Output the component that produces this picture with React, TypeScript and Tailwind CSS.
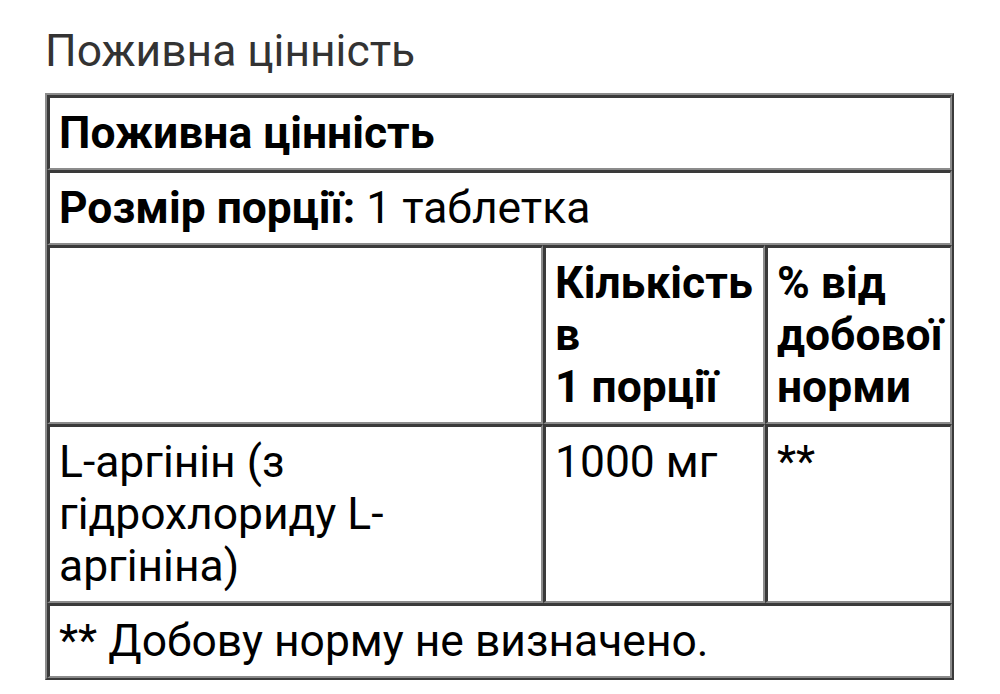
const cell =
  "align-top border-t-[3px] border-l-[3px] border-b-2 border-r-2 border-t-[#3a3a3a] border-l-[#3a3a3a] border-b-[#8c8c8c] border-r-[#8c8c8c] px-[9px] py-[9px] text-left";

export default function App() {
  return (
    <div className="min-h-screen bg-white pl-[45px] pt-[25px] font-['Roboto','Noto_Sans',sans-serif]">
      <h2 className="text-[44.4px] font-normal leading-[52px] text-[#333333]">Поживна цінність</h2>

      <table className="mt-[16px] w-[909px] table-fixed border-separate border-spacing-0 border-2 border-t-[#8c8c8c] border-l-[#8c8c8c] border-b-[#3a3a3a] border-r-[#3a3a3a] text-[44.4px] leading-[52px] text-black">
        <colgroup>
          <col className="w-[496px]" />
          <col className="w-[222px]" />
          <col className="w-[187px]" />
        </colgroup>
        <tbody>
          <tr>
            <th colSpan={3} className={`${cell} font-bold`}>
              Поживна цінність
            </th>
          </tr>
          <tr>
            <td colSpan={3} className={cell}>
              <strong className="font-bold">Розмір порції:</strong> 1 таблетка
            </td>
          </tr>
          <tr>
            <th className={cell}></th>
            <th className={`${cell} font-bold`}>
              Кількість в
              <br />1 порції
            </th>
            <th className={`${cell} font-bold`}>% від добової норми</th>
          </tr>
          <tr>
            <td className={cell}>L-аргінін (з гідрохлориду L-аргініна)</td>
            <td className={cell}>1000 мг</td>
            <td className={cell}>**</td>
          </tr>
          <tr>
            <td colSpan={3} className={cell}>
              ** Добову норму не визначено.
            </td>
          </tr>
        </tbody>
      </table>
    </div>
  );
}
